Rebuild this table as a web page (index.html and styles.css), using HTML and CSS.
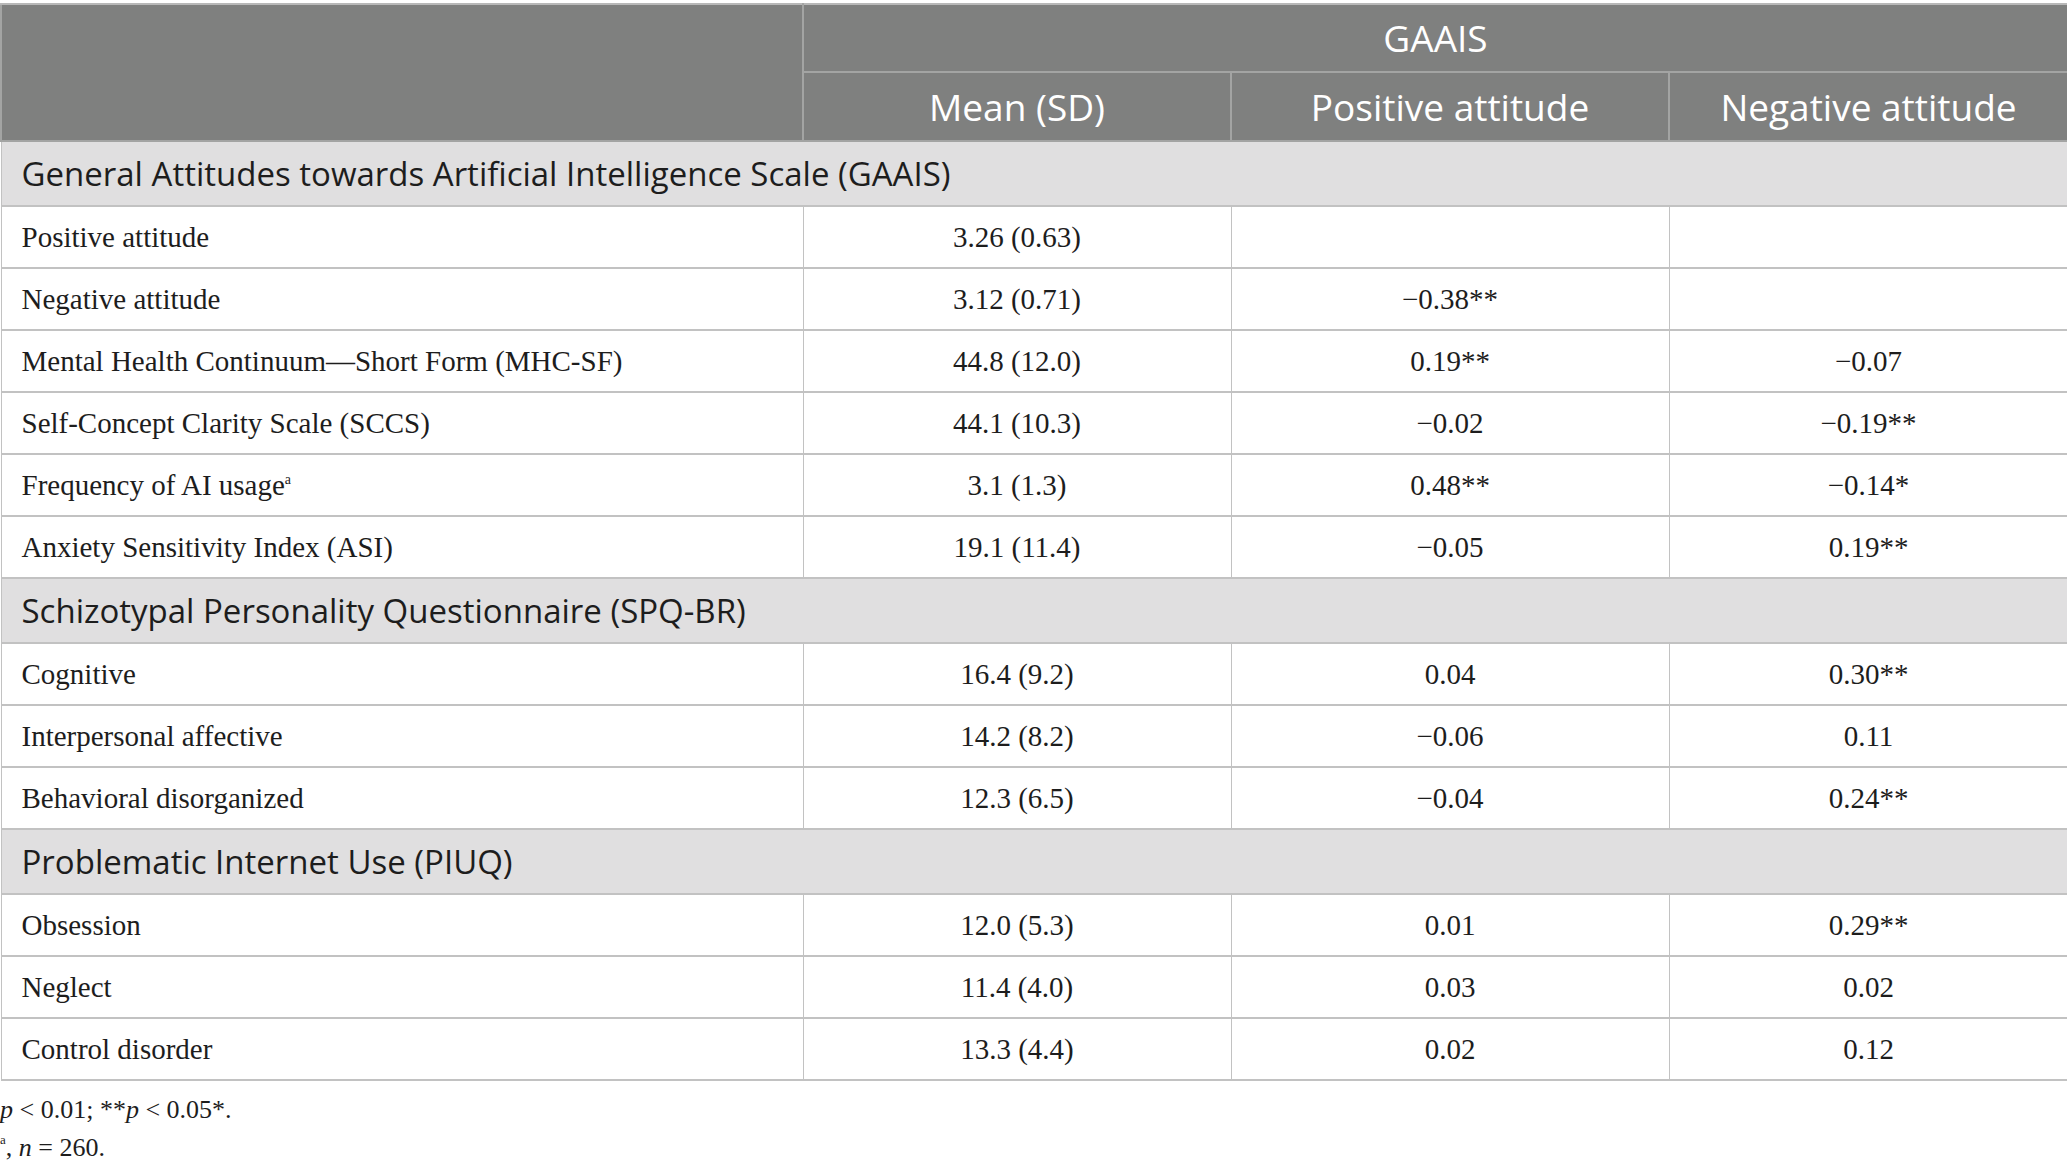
FILE: index.html
```html
<!DOCTYPE html>
<html lang="en">
<head>
<meta charset="utf-8">
<title>GAAIS correlations</title>
<link rel="stylesheet" href="styles.css">
</head>
<body>
<div class="page">
<table class="data-table">
  <colgroup>
    <col class="c-label">
    <col class="c-mean">
    <col class="c-pos">
    <col class="c-neg">
  </colgroup>
  <thead>
    <tr class="head-1">
      <th rowspan="2" class="blank"></th>
      <th colspan="3">GAAIS</th>
    </tr>
    <tr class="head-2">
      <th>Mean (SD)</th>
      <th>Positive attitude</th>
      <th>Negative attitude</th>
    </tr>
  </thead>
  <tbody>
    <tr class="section"><td colspan="4">General Attitudes towards Artificial Intelligence Scale (GAAIS)</td></tr>
    <tr><td>Positive attitude</td><td>3.26 (0.63)</td><td></td><td></td></tr>
    <tr><td>Negative attitude</td><td>3.12 (0.71)</td><td>−0.38**</td><td></td></tr>
    <tr><td>Mental Health Continuum—Short Form (MHC-SF)</td><td>44.8 (12.0)</td><td>0.19**</td><td>−0.07</td></tr>
    <tr><td>Self-Concept Clarity Scale (SCCS)</td><td>44.1 (10.3)</td><td>−0.02</td><td>−0.19**</td></tr>
    <tr><td>Frequency of AI usage<sup>a</sup></td><td>3.1 (1.3)</td><td>0.48**</td><td>−0.14*</td></tr>
    <tr><td>Anxiety Sensitivity Index (ASI)</td><td>19.1 (11.4)</td><td>−0.05</td><td>0.19**</td></tr>
    <tr class="section"><td colspan="4">Schizotypal Personality Questionnaire (SPQ-BR)</td></tr>
    <tr><td>Cognitive</td><td>16.4 (9.2)</td><td>0.04</td><td>0.30**</td></tr>
    <tr><td>Interpersonal affective</td><td>14.2 (8.2)</td><td>−0.06</td><td>0.11</td></tr>
    <tr><td>Behavioral disorganized</td><td>12.3 (6.5)</td><td>−0.04</td><td>0.24**</td></tr>
    <tr class="section"><td colspan="4">Problematic Internet Use (PIUQ)</td></tr>
    <tr><td>Obsession</td><td>12.0 (5.3)</td><td>0.01</td><td>0.29**</td></tr>
    <tr><td>Neglect</td><td>11.4 (4.0)</td><td>0.03</td><td>0.02</td></tr>
    <tr><td>Control disorder</td><td>13.3 (4.4)</td><td>0.02</td><td>0.12</td></tr>
  </tbody>
</table>
<div class="notes">
  <p><i>p</i> &lt; 0.01; **<i>p</i> &lt; 0.05*.</p>
  <p><sup>a</sup>, <i>n</i> = 260.</p>
</div>
</div>
</body>
</html>
```

FILE: styles.css
```css
html, body {
  margin: 0;
  padding: 0;
  background: #ffffff;
}

.page {
  padding-top: 3px;
  width: 2067px;
}

.data-table {
  width: 2067px;
  border-collapse: collapse;
  table-layout: fixed;
  font-family: "Liberation Serif", "Times New Roman", serif;
  font-size: 29px;
  color: #1d1d1d;
}

.c-label { width: 802px; }
.c-mean { width: 428px; }
.c-pos { width: 438px; }
.c-neg { width: 399px; }

.data-table th {
  background: #7f807f;
  color: #ffffff;
  font-family: "Open Sans", "Noto Sans", sans-serif;
  font-weight: 400;
  font-size: 37px;
  line-height: 44px;
  text-align: center;
  border: 2px solid #a3a4a3;
  padding: 0;
}

.data-table thead tr:first-child th {
  border-top: 2px solid #b8b8b8;
}

.head-1 th { height: 66px; }
.head-2 th { height: 67px; }

.data-table th.blank {
  border-right: 2px solid #a3a4a3;
}

.data-table td {
  border-top: 2px solid #c2c2c2;
  border-bottom: 2px solid #c2c2c2;
  border-left: 1px solid #c2c2c2;
  border-right: 1px solid #c2c2c2;
  text-align: center;
  padding: 0;
  height: 60px;
  line-height: 34px;
}

.data-table td:first-child {
  text-align: left;
  padding-left: 20px;
}

.data-table tr.section td {
  background: #e0dfe0;
  font-family: "Open Sans", "Noto Sans", sans-serif;
  font-size: 33px;
  line-height: 44px;
  height: 63px;
  color: #1d1d1d;
}

.data-table sup {
  font-size: 14px;
  vertical-align: 11px;
  line-height: 0;
}

.notes {
  font-family: "Liberation Serif", "Times New Roman", serif;
  font-size: 26px;
  color: #1d1d1d;
  padding-top: 10px;
}

.notes p {
  margin: 0;
  line-height: 38px;
}

.notes sup {
  font-size: 13px;
  vertical-align: 12px;
  line-height: 0;
}
```
